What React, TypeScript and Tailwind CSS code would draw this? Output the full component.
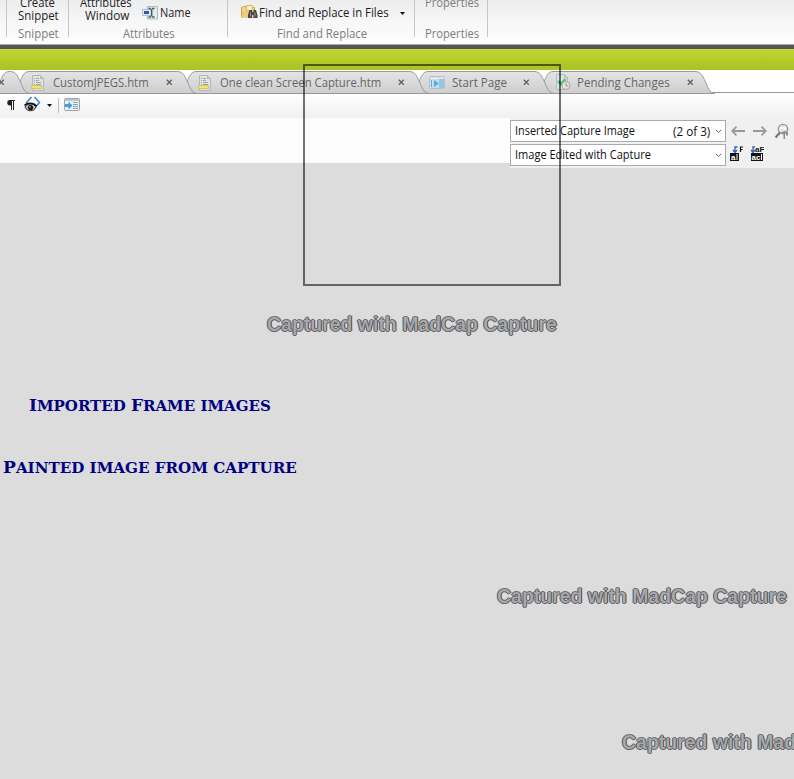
import { useLayoutEffect, useRef, useState, type ReactNode } from "react";

/** Text squeezed or stretched horizontally to an exact width. */
function Fit({ w, className = "", children }: { w: number; className?: string; children: ReactNode }) {
  const ref = useRef<HTMLSpanElement>(null);
  const [scale, setScale] = useState(1);
  useLayoutEffect(() => {
    if (ref.current && ref.current.offsetWidth) setScale(w / ref.current.offsetWidth);
  }, [w]);
  return (
    <span className={`block shrink-0 whitespace-nowrap ${className}`} style={{ width: w }}>
      <span ref={ref} className="inline-block origin-left" style={{ transform: `scaleX(${scale})` }}>
        {children}
      </span>
    </span>
  );
}

function DocIcon() {
  return (
    <svg width="14" height="16" viewBox="0 0 14 16" className="shrink-0">
      <path d="M1.5.5h8l3 3v12h-11z" fill="#dfe5e4" stroke="#a9bcbd" />
      <path d="M9.5.5v3h3" fill="#c4d3d5" stroke="#a9bcbd" />
      <path d="M3 3.5h1m1 0h3M3 5.5h1m1 0h3M3 7.5h1m1 0h5M3 9.5h1m1 0h5" stroke="#9aa6a8" />
      <rect x=".5" y="10.5" width="10" height="3" fill="#f5e36c" stroke="#d9c35e" />
    </svg>
  );
}

function StartIcon() {
  return (
    <svg width="17" height="14" viewBox="0 0 17 14" className="shrink-0">
      <rect x=".5" y=".5" width="15" height="12" rx="1" fill="#d9dcde" stroke="#b9bfc3" />
      <path d="M1 2.5h14" stroke="#ececec" />
      <rect x="1" y="3" width="9" height="9" fill="#bfe0f0" />
      <rect x="10" y="3" width="5" height="9" fill="#8fc7e4" />
      <path d="M2.5 4v7" stroke="#6aa9d0" />
      <path d="M5 4l5 3.5L5 11z" fill="#5fa8d3" />
    </svg>
  );
}

function PendingIcon() {
  return (
    <svg width="15" height="17" viewBox="0 0 15 17" className="shrink-0">
      <path d="M.5.5h8l3 3v12H.5z" fill="#dde5e3" stroke="#a9c2c0" />
      <path d="M8.5.5v3h3" fill="none" stroke="#a9c2c0" />
      <path d="M2 7l3 3 4.5-5" fill="none" stroke="#5cc46e" strokeWidth="2.6" />
      <circle cx="10" cy="11.5" r="4" fill="#e6e6e6" stroke="#a5a5a5" />
      <path d="M10 9v3h2.5" fill="none" stroke="#909090" />
    </svg>
  );
}

function Cross() {
  return (
    <svg width="7" height="7" viewBox="0 0 7 7" className="shrink-0">
      <path d="M.8.8l5 5M5.800.8l-5 5" stroke="#606060" strokeWidth="1.3" />
    </svg>
  );
}

function TabShape({ w }: { w: number }) {
  const curve = `C${w - 4} .5 ${w - 2} 5.500 ${w} 10C${w + 3} 16 ${w + 4} 22 ${w + 10} 22.500`;
  return (
    <svg width={w + 12} height="23" className="absolute left-0 top-0 -z-10">
      <defs>
        <linearGradient id={`tab${w}`} x1="0" y1="0" x2="0" y2="1">
          <stop offset="0" stopColor="#e4e4e4" />
          <stop offset="1" stopColor="#cecece" />
        </linearGradient>
      </defs>
      <path d={`M0 11C2 6 4 .5 9 .5H${w - 10}${curve}H0Z`} fill={`url(#tab${w})`} />
      <path d={`M0 11C2 6 4 .5 9 .5H${w - 10}${curve}H0`} fill="none" stroke="#999" />
    </svg>
  );
}

function Tab({ w, textW, gap, icon, pad, z, title }: {
  w: number; textW: number; gap: number; icon: ReactNode; pad: string; z: string; title: string;
}) {
  return (
    <div className={`relative isolate flex h-[23px] shrink-0 items-center ${z}`} style={{ width: w }}>
      <TabShape w={w} />
      <div className={`flex w-[33px] shrink-0 ${pad}`}>{icon}</div>
      <Fit w={textW} className="pt-px text-[12px] leading-[18px] text-[#656565]">{title}</Fit>
      <div style={{ marginLeft: gap }}><Cross /></div>
    </div>
  );
}

function Caret() {
  return (
    <svg width="5" height="3" viewBox="0 0 5 3" className="shrink-0"><path d="M0 0h5L2.500 3z" fill="#111" /></svg>
  );
}

function Chevron() {
  return (
    <svg width="7" height="5" viewBox="0 0 7 5" className="shrink-0">
      <path d="M.8.8l2.700 2.700L6.200.8" fill="none" stroke="#606060" />
    </svg>
  );
}

function Arrow({ flip = false }: { flip?: boolean }) {
  return (
    <svg width="14" height="10" viewBox="0 0 14 10" className={`shrink-0 ${flip ? "-scale-x-100" : ""}`}>
      <path d="M1 5h13M5.500.7L1.200 5l4.300 4.300" fill="none" stroke="#999" strokeWidth="1.800" />
    </svg>
  );
}

function Ribbon() {
  return (
    <div className="flex h-[44px] overflow-hidden bg-linear-to-b from-[#ededed] via-[#f7f7f7] to-[#fdfdfd] text-[12px] leading-[12px] text-[#222]">
      <div className="h-[37px] w-[7px] shrink-0 border-r border-[#c6c6c6]" />
      <div className="h-[37px] w-[62px] shrink-0 border-r border-[#c6c6c6]">
        <Fit w={35} className="-mt-[3px] ml-[13px]">Create</Fit>
        <Fit w={41} className="mt-px ml-[11px]">Snippet</Fit>
        <Fit w={41} className="mt-[6px] ml-[11px] text-[#7c7c7c]">Snippet</Fit>
      </div>
      <div className="h-[37px] w-[159px] shrink-0 border-r border-[#c6c6c6]">
        <div className="flex h-[28px]">
          <div className="w-[63px] shrink-0 pl-[11px]">
            <Fit w={52} className="-mt-[3px]">Attributes</Fit>
            <Fit w={44} className="mt-px ml-[5px]">Window</Fit>
          </div>
          <svg width="17" height="16" viewBox="0 0 17 16" className="ml-[10px] mt-[5px] shrink-0">
            <rect x="5.500" y="1.500" width="10" height="12.500" fill="#dcecef" stroke="#a8bec2" />
            <rect x=".5" y="4.500" width="10" height="6" fill="#e6edf6" stroke="#b5c0ca" />
            <rect x="2" y="6" width="5" height="3" fill="#2459c4" />
            <path d="M6.500 3.500H9M10 3.500h2.500M9.500 4v7.500M6.500 12H9m1 0h2.500" stroke="#555" strokeWidth="1.300" />
          </svg>
          <Fit w={31} className="mt-[7px] ml-px">Name</Fit>
        </div>
        <Fit w={52} className="ml-[54px] text-[#7c7c7c]">Attributes</Fit>
      </div>
      <div className="h-[37px] w-[187px] shrink-0 border-r border-[#c6c6c6]">
        <div className="flex h-[28px]">
          <svg width="18" height="16" viewBox="0 0 18 16" className="ml-[13px] mt-[4px] shrink-0">
            <path d="M.5 3.500l2-1h4l1 1h6V13H.5z" fill="#f1d48c" stroke="#cda64e" />
            <path d="M5.500 1.500h6v5h-6z" fill="#f7ecce" stroke="#d6b66b" />
            <path d="M1 7h13v6H1z" fill="#edcc7c" />
            <path d="M8.500 6h2.500v2h1.500V6H15l1.500 5v3h-4v-3h-1.500v3H7v-3z" fill="#464646" />
            <path d="M9.500 8.500v4m4.500-4v4" stroke="#999" />
          </svg>
          <Fit w={130} className="mt-[7px]">Find and Replace in Files</Fit>
          <div className="ml-[11px] mt-[12px]"><Caret /></div>
        </div>
        <Fit w={90} className="ml-[49px] text-[#7c7c7c]">Find and Replace</Fit>
      </div>
      <div className="h-[37px] w-[73px] shrink-0 border-r border-[#c6c6c6] text-[#7c7c7c]">
        <Fit w={54} className="-mt-[3px] ml-[10px]">Properties</Fit>
        <Fit w={54} className="mt-[19px] ml-[10px]">Properties</Fit>
      </div>
    </div>
  );
}

function Toolbar() {
  return (
    <div className="flex h-[25px] bg-linear-to-b from-white to-[#f0f0f0]">
      <svg width="8" height="10" viewBox="0 0 8 10" className="ml-[7px] mt-[7px] shrink-0">
        <path d="M3.500 0H8v1H7v9H6V1H5v9H4V5.500H3a2.700 2.700 0 010-5.500z" fill="#222" />
      </svg>
      <svg width="17" height="17" viewBox="0 0 17 17" className="ml-[9px] mt-[3px] shrink-0">
        <path d="M7.500 1L2.500 6.500l2 2.500M10.500 1l5 5.500-5 5.500" fill="none" stroke="#3287d4" strokeWidth="1.500" />
        <path d="M1 11c2-4 9-4 11 0-2 5-9 5-11 0z" fill="#c9c2b8" stroke="#222" />
        <path d="M.5 9.500c3-3 9-3 12 .5" fill="none" stroke="#111" strokeWidth="1.600" />
        <circle cx="6.500" cy="11.500" r="2.600" fill="#111" />
        <circle cx="6" cy="11" r=".8" fill="#ddd" />
      </svg>
      <div className="ml-[6px] mt-[11px]"><Caret /></div>
      <div className="ml-[6px] mt-[5px] h-[15px] w-px bg-[#bdbdbd]" />
      <svg width="16" height="13" viewBox="0 0 16 13" className="ml-[5px] mt-[5px] shrink-0">
        <rect x=".5" y=".5" width="15" height="12" rx="1" fill="#edf1f4" stroke="#99a4ac" />
        <path d="M1 2h14" stroke="#bcc5cc" strokeWidth="2" />
        <path d="M9 4.500h5M9 6.500h5M9 8.500h5M9 10.500h5" stroke="#8aa0b0" />
        <path d="M1 6h3.500V3.500L8.500 7.500l-4 4V9H1z" fill="#3d9ee0" />
      </svg>
    </div>
  );
}

function FindPanel() {
  const combo = "flex h-[22px] w-[216px] shrink-0 items-center border border-[#aaaab0] bg-white pl-[4px] text-[12px] leading-[18px] text-[#111]";
  return (
    <div className="flex h-[50px] w-[284px] shrink-0 flex-col gap-[2px] bg-[#f0f0f0] pt-[2px]">
      <div className="flex items-center">
        <div className={combo}>
          <Fit w={120}>Inserted Capture Image</Fit>
          <Fit w={37} className="ml-[38px] pt-px">(2 of 3)</Fit>
          <div className="ml-[5px]"><Chevron /></div>
        </div>
        <div className="ml-[5px] flex"><Arrow /></div>
        <div className="ml-[8px] flex"><Arrow flip /></div>
        <svg width="17" height="17" viewBox="0 0 17 17" className="ml-[7px] shrink-0">
          <circle cx="9" cy="6" r="4.700" fill="#dce9f0" stroke="#8c969d" strokeWidth="1.300" />
          <path d="M6 5h6" stroke="#fff" strokeWidth="2" />
          <path d="M6 9.500L1.500 14.500" stroke="#777" strokeWidth="2.200" />
          <path d="M7 9.500c3-2 6-1.500 7 0v3h-2V10h-1v6H9.500v-5z" fill="#8c8c8c" />
        </svg>
      </div>
      <div className="flex items-start">
        <div className={combo}>
          <Fit w={136}>Image Edited with Capture</Fit>
          <div className="ml-[64px]"><Chevron /></div>
        </div>
        <svg width="13" height="15" viewBox="0 0 13 15" className="ml-[4px] mt-[2px] shrink-0">
          <path d="M7.500 1H5v5M3 4l2 2.500L7 4" fill="none" stroke="#315fbd" strokeWidth="1.300" />
          <path d="M10.500 6V1H13M10.500 3.500h2" fill="none" stroke="#111" strokeWidth="1.200" />
          <path d="M0 7h9v8H0z" fill="#111" />
          <text x="1" y="13.500" fill="#fff" fontSize="8" fontWeight="700" fontFamily="Liberation Sans, sans-serif">a</text>
          <path d="M7 8v6" stroke="#fff" />
        </svg>
        <svg width="14" height="15" viewBox="0 0 14 15" className="ml-[7px] mt-[2px] shrink-0">
          <path d="M5 1H3v5M1 4l2 2.500L5 4" fill="none" stroke="#315fbd" strokeWidth="1.300" />
          <text x="5" y="6" fill="#111" fontSize="8" fontWeight="700" fontFamily="Liberation Sans, sans-serif">aF</text>
          <path d="M1 7h12v8H1z" fill="#111" />
          <text x="1.500" y="13.500" fill="#fff" fontSize="8" fontWeight="700" fontFamily="Liberation Sans, sans-serif">ac</text>
          <path d="M11.500 8v6" stroke="#fff" />
        </svg>
      </div>
    </div>
  );
}

function Watermark({ className }: { className: string }) {
  return (
    <div className={`font-['Liberation_Sans',Arial,sans-serif] text-[20px] leading-[24px] font-bold text-[#a9a9a9] [text-shadow:-1px_0_#355f8b,1px_0_#70431f,0_-1px_#74706d,0_1px_#65686b] ${className}`}>
      <Fit w={290}>Captured with MadCap Capture</Fit>
    </div>
  );
}

function Caption({ w, className, children }: { w: number; className: string; children: ReactNode }) {
  return (
    <div className={`font-['DejaVu_Serif',serif] text-[15px] leading-[20px] font-bold text-[#000080] uppercase ${className}`}>
      <Fit w={w}>{children}</Fit>
    </div>
  );
}

export default function App() {
  return (
    <div className="relative flex h-[779px] w-[794px] flex-col overflow-hidden bg-[#dcdcdc] font-['Open_Sans','Noto_Sans',sans-serif]">
      <Ribbon />
      <div className="h-px shrink-0 bg-[#a9a9a9]" />
      <div className="h-[4px] shrink-0 bg-[#555658]" />
      <div className="h-[21px] shrink-0 border-t border-[#c3d84e] bg-linear-to-b from-[#bcd52f] to-[#abc126]" />
      <div className="flex h-[23px] shrink-0 bg-white pt-px">
        <div className="relative z-0 flex h-[22px] w-full">
          <div className="absolute bottom-0 left-0 -z-10 h-px w-full bg-[#999]" />
          <div className="relative isolate z-50 flex h-[22px] w-[20px] shrink-0 items-center">
            <TabShape w={20} />
            <div className="-ml-[2px]"><Cross /></div>
          </div>
          <Tab w={167} textW={96} gap={17} icon={<DocIcon />} pad="pl-[11px]" z="z-40" title="CustomJPEGS.htm" />
          <Tab w={232} textW={161} gap={17} icon={<DocIcon />} pad="pl-[11px]" z="z-30" title="One clean Screen Capture.htm" />
          <Tab w={125} textW={55} gap={16} icon={<StartIcon />} pad="pl-[10px]" z="z-20" title="Start Page" />
          <Tab w={161} textW={93} gap={17} icon={<PendingIcon />} pad="pl-[12px]" z="z-10" title="Pending Changes" />
        </div>
      </div>
      <Toolbar />
      <div className="flex shrink-0 items-start">
        <div className="h-[45px] w-[510px] bg-[#fdfdfd]" />
        <FindPanel />
      </div>
      <div className="flex flex-col items-start">
        <Watermark className="mt-[144px] ml-[267px]" />
        <Caption w={242} className="mt-[59px] ml-[29px]">
          <span className="text-[17px]">I</span>mported <span className="text-[17px]">F</span>rame images
        </Caption>
        <Caption w={294} className="mt-[41px] ml-[3px]">
          <span className="text-[17px]">P</span>ainted image from capture
        </Caption>
        <Watermark className="mt-[106px] ml-[497px]" />
        <Watermark className="mt-[122px] ml-[622px]" />
      </div>
      <div className="absolute top-[64px] left-[303px] z-50 h-[222px] w-[258px] border-2 border-black/55" />
    </div>
  );
}
